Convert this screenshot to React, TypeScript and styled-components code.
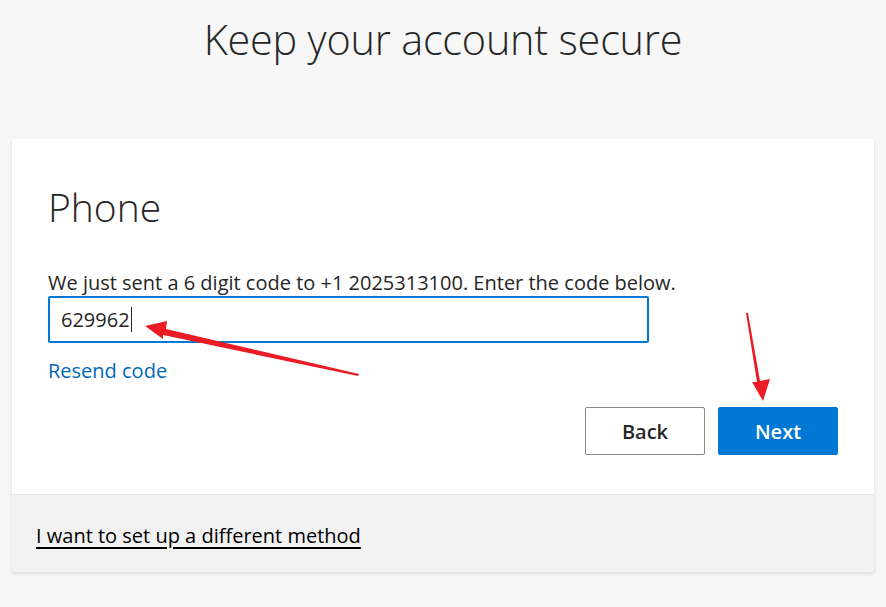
import React from "react";
import styled, { createGlobalStyle } from "styled-components";

const Global = createGlobalStyle`
  html, body { margin: 0; padding: 0; background: #f7f7f7; }
  body { font-family: "Open Sans", "Noto Sans", sans-serif; color: #262626; }
  * { box-sizing: border-box; }
`;

const Page = styled.div`
  position: relative;
  width: 886px;
  height: 607px;
  background: #f7f7f7;
  display: flex;
  flex-direction: column;
  align-items: stretch;
`;

const Title = styled.h1`
  margin: 0;
  height: 139px;
  padding-top: 11px;
  text-align: center;
  font-weight: 300;
  font-size: 41.4px;
  line-height: 56px;
  color: #262626;
  letter-spacing: -0.2px;
`;

const Card = styled.div`
  margin: 0 12px;
  background: #fff;
  box-shadow: 0 1.6px 3.6px rgba(0,0,0,0.13), 0 0.3px 0.9px rgba(0,0,0,0.11);
  display: flex;
  flex-direction: column;
`;

const Body = styled.div`
  padding: 42px 36px 39px 36px;
  display: flex;
  flex-direction: column;
`;

const Heading = styled.h2`
  margin: 0;
  font-weight: 300;
  font-size: 39px;
  line-height: 52px;
  color: #262626;
`;

const Instruction = styled.p`
  margin: 37px 0 0 0;
  font-size: 20px;
  line-height: 26px;
  color: #262626;
`;

const CodeInput = styled.div`
  width: 601px;
  height: 47px;
  border: 2px solid #0078d4;
  border-radius: 2px;
  padding: 0 11px;
  display: flex;
  align-items: center;
  font-size: 20px;
  color: #262626;
`;

const Caret = styled.span`
  display: inline-block;
  width: 1px;
  height: 25px;
  background: #262626;
  margin-left: 1px;
`;

const Link = styled.a`
  margin-top: 15px;
  font-size: 20px;
  line-height: 26px;
  color: #0067b8;
  text-decoration: none;
  align-self: flex-start;
`;

const Actions = styled.div`
  margin-top: 23px;
  display: flex;
  justify-content: flex-end;
  gap: 13px;
`;

const Button = styled.button<{ $primary?: boolean }>`
  width: 120px;
  height: 48px;
  border-radius: 2px;
  font-family: "Open Sans", "Noto Sans", sans-serif;
  font-weight: 600;
  font-size: 20px;
  border: 1px solid ${(p) => (p.$primary ? "#0078d4" : "#8a8886")};
  background: ${(p) => (p.$primary ? "#0078d4" : "#fff")};
  color: ${(p) => (p.$primary ? "#fff" : "#262626")};
`;

const Footer = styled.div`
  background: #f2f2f2;
  border-top: 1px solid #e8e8e8;
  height: 78px;
  padding: 0 24px;
  display: flex;
  align-items: center;
`;

const FooterLink = styled.a`
  font-size: 20px;
  color: #000;
  text-decoration: underline;
  text-underline-offset: 4px;
  padding-top: 3px;
`;

const Overlay = styled.svg`
  position: absolute;
  left: 0;
  top: 0;
  pointer-events: none;
`;

export default function App() {
  return (
    <>
      <Global />
      <Page>
        <Title>Keep your account secure</Title>
        <Card>
          <Body>
            <Heading>Phone</Heading>
            <Instruction>We just sent a 6 digit code to +1 2025313100. Enter the code below.</Instruction>
            <CodeInput>
              629962
              <Caret />
            </CodeInput>
            <Link href="#">Resend code</Link>
            <Actions>
              <Button>Back</Button>
              <Button $primary>Next</Button>
            </Actions>
          </Body>
          <Footer>
            <FooterLink href="#">I want to set up a different method</FooterLink>
          </Footer>
        </Card>
        <Overlay width="886" height="607" viewBox="0 0 886 607">
          <polygon
            fill="#ec1c24"
            points="145,326 167,321 166,329 359,374 358,376 163,335 163,339"
          />
          <polygon
            fill="#ec1c24"
            points="746,313 748,313 760,381 770,379 763,401 752,382 757,382"
          />
        </Overlay>
      </Page>
    </>
  );
}
